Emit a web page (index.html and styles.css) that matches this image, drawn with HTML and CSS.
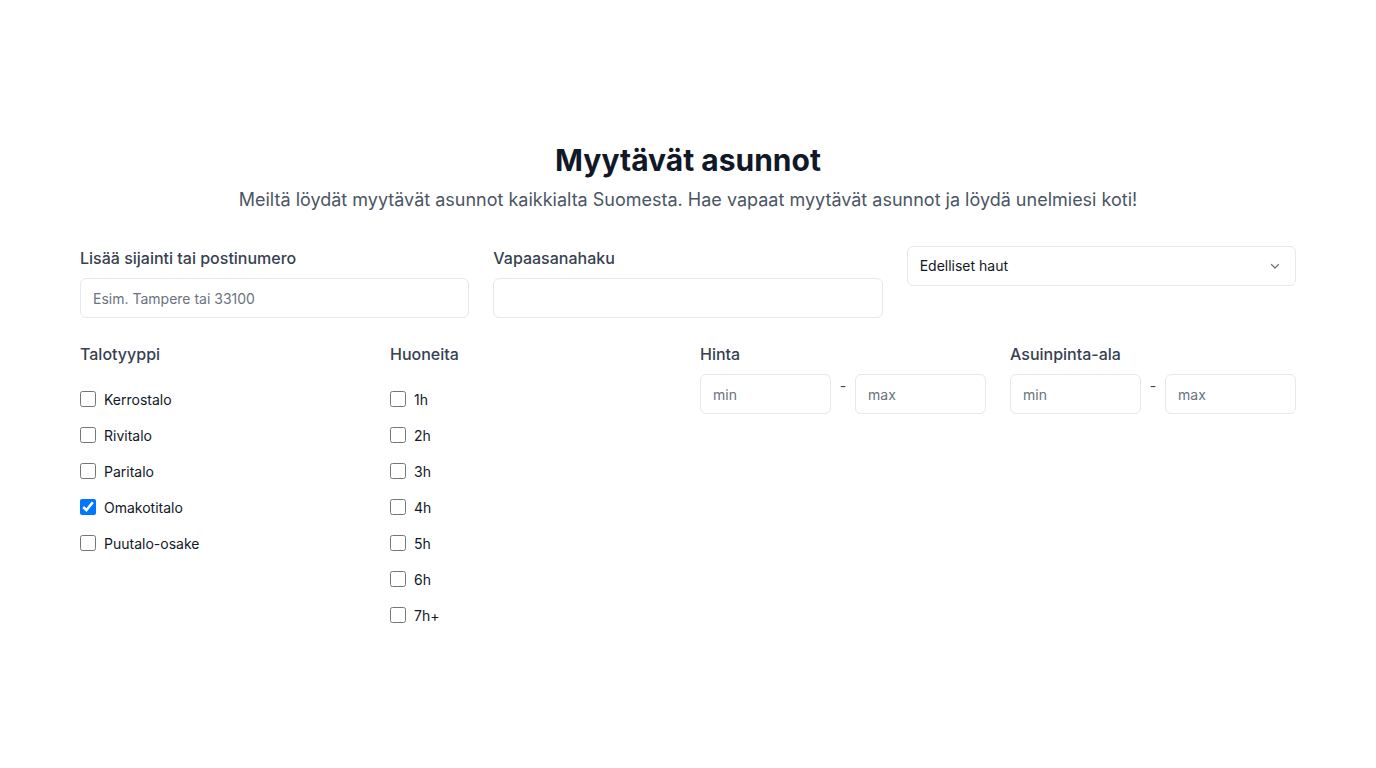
FILE: index.html
```html
<!DOCTYPE html>
<html lang="fi">
<head>
<meta charset="utf-8">
<title>Myytävät asunnot</title>
<link rel="stylesheet" href="styles.css">
</head>
<body>
<main class="page">
  <h1 class="title">Myytävät asunnot</h1>
  <p class="subtitle">Meiltä löydät myytävät asunnot kaikkialta Suomesta. Hae vapaat myytävät asunnot ja löydä unelmiesi koti!</p>

  <div class="top-row">
    <div class="field">
      <label class="label">Lisää sijainti tai postinumero</label>
      <input class="input" type="text" placeholder="Esim. Tampere tai 33100">
    </div>
    <div class="field">
      <label class="label">Vapaasanahaku</label>
      <input class="input" type="text">
    </div>
    <div class="field">
      <div class="select">
        <span>Edelliset haut</span>
        <svg class="chevron" width="12" height="12" viewBox="0 0 12 12" fill="none"><path d="M2.5 4.5L6 8l3.5-3.5" stroke="#6b7280" stroke-width="1.2" stroke-linecap="round" stroke-linejoin="round"/></svg>
      </div>
    </div>
  </div>

  <div class="bottom-row">
    <div class="group">
      <div class="label">Talotyyppi</div>
      <ul class="checks">
        <li><label class="check"><input type="checkbox"><span>Kerrostalo</span></label></li>
        <li><label class="check"><input type="checkbox"><span>Rivitalo</span></label></li>
        <li><label class="check"><input type="checkbox"><span>Paritalo</span></label></li>
        <li><label class="check"><input type="checkbox" checked><span>Omakotitalo</span></label></li>
        <li><label class="check"><input type="checkbox"><span>Puutalo-osake</span></label></li>
      </ul>
    </div>
    <div class="group">
      <div class="label">Huoneita</div>
      <ul class="checks">
        <li><label class="check"><input type="checkbox"><span>1h</span></label></li>
        <li><label class="check"><input type="checkbox"><span>2h</span></label></li>
        <li><label class="check"><input type="checkbox"><span>3h</span></label></li>
        <li><label class="check"><input type="checkbox"><span>4h</span></label></li>
        <li><label class="check"><input type="checkbox"><span>5h</span></label></li>
        <li><label class="check"><input type="checkbox"><span>6h</span></label></li>
        <li><label class="check"><input type="checkbox"><span>7h+</span></label></li>
      </ul>
    </div>
    <div class="group">
      <div class="label">Hinta</div>
      <div class="range">
        <input class="input" type="text" placeholder="min">
        <span class="dash">-</span>
        <input class="input" type="text" placeholder="max">
      </div>
    </div>
    <div class="group">
      <div class="label">Asuinpinta-ala</div>
      <div class="range">
        <input class="input" type="text" placeholder="min">
        <span class="dash">-</span>
        <input class="input" type="text" placeholder="max">
      </div>
    </div>
  </div>
</main>
</body>
</html>
```

FILE: styles.css
```css
* { box-sizing: border-box; }
html, body { margin: 0; padding: 0; background: #fff; }
body {
  font-family: Inter, "Noto Sans", "Liberation Sans", sans-serif;
  color: #111827;
}
.page {
  width: 1216px;
  margin: 0 auto;
  padding-top: 142px;
}
.title {
  margin: 0;
  text-align: center;
  font-size: 30px;
  line-height: 36px;
  font-weight: 700;
  color: #111827;
}
.subtitle {
  margin: 8px 0 0;
  text-align: center;
  font-size: 18px;
  line-height: 28px;
  color: #4b5563;
}
.top-row {
  margin-top: 32px;
  display: grid;
  grid-template-columns: repeat(3, 1fr);
  gap: 24px;
}
.field { display: flex; flex-direction: column; }
.label {
  display: block;
  font-size: 16px;
  line-height: 24px;
  font-weight: 500;
  color: #374151;
}
.input {
  height: 40px;
  width: 100%;
  border: 1px solid #e5e7eb;
  border-radius: 6px;
  padding: 0 12px;
  font-family: inherit;
  font-size: 14px;
  color: #111827;
  background: #fff;
  outline: none;
}
.field .input { margin-top: 8px; }
.input::placeholder { color: #6b7280; }
.select {
  height: 40px;
  border: 1px solid #e5e7eb;
  border-radius: 6px;
  padding: 0 14px 0 12px;
  display: flex;
  align-items: center;
  justify-content: space-between;
  font-size: 14px;
  line-height: 20px;
  color: #111827;
}
.select span { margin-top: -1px; }
.bottom-row {
  margin-top: 24px;
  display: grid;
  grid-template-columns: repeat(4, 1fr);
  gap: 24px;
}
.checks {
  list-style: none;
  margin: 21px 0 0;
  padding: 0;
  display: flex;
  flex-direction: column;
  gap: 12px;
}
.check {
  display: flex;
  align-items: center;
  gap: 8px;
  height: 24px;
  font-size: 14px;
  color: #111827;
}
.check input {
  width: 16px;
  height: 16px;
  margin: 0;
}
.range {
  margin-top: 8px;
  display: grid;
  grid-template-columns: 1fr 24px 1fr;
}
.dash {
  text-align: center;
  font-size: 14px;
  line-height: 24px;
  color: #374151;
}
```
